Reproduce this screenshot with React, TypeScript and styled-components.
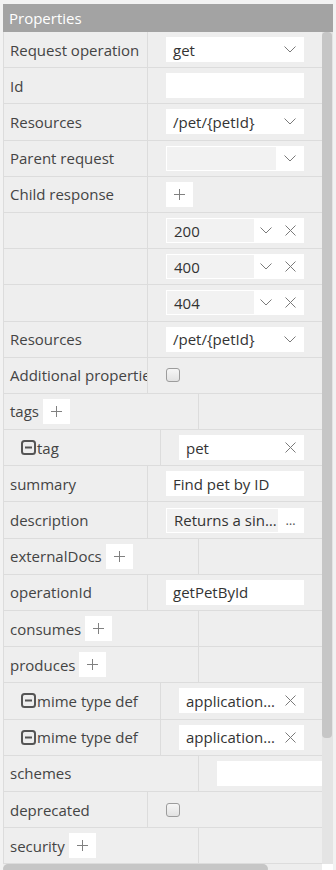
import React from 'react'
import styled, { createGlobalStyle } from 'styled-components'

const GlobalStyle = createGlobalStyle`
  html, body {
    margin: 0;
    padding: 0;
    background: #f2f2f2;
    overflow: hidden;
  }
  body {
    font-family: "Open Sans", "Liberation Sans", sans-serif;
  }
`

const SPLIT = 144
const SPLIT_NESTED = 157
const SPLIT_WIDE = 195

const Chevron = () => (
  <svg width="12" height="7" viewBox="0 0 12 7">
    <polyline points="0.5,0.5 6,6 11.5,0.5" fill="none" stroke="#7a7a7a" strokeWidth="1" />
  </svg>
)

const Cross = () => (
  <svg width="11" height="11" viewBox="0 0 11 11">
    <line x1="0.5" y1="0.5" x2="10.5" y2="10.5" stroke="#7a7a7a" strokeWidth="1" />
    <line x1="10.5" y1="0.5" x2="0.5" y2="10.5" stroke="#7a7a7a" strokeWidth="1" />
  </svg>
)

const Plus = () => (
  <svg width="11" height="11" viewBox="0 0 11 11">
    <line x1="5.5" y1="0" x2="5.5" y2="11" stroke="#808080" strokeWidth="1" />
    <line x1="0" y1="5.5" x2="11" y2="5.5" stroke="#808080" strokeWidth="1" />
  </svg>
)

const MinusBox = () => (
  <svg width="15" height="15" viewBox="0 0 15 15">
    <rect x="1" y="1" width="13" height="13" rx="2.5" fill="none" stroke="#555" strokeWidth="2" />
    <line x1="4" y1="7.5" x2="11" y2="7.5" stroke="#555" strokeWidth="2" />
  </svg>
)

const Add = () => (
  <AddButton>
    <Plus />
  </AddButton>
)

const App = () => {
  return (
    <>
      <GlobalStyle />
      <Panel>
        <Header>Properties</Header>
        <ScrollFrame>
          <Viewport>
            <Row $split={SPLIT}>
              <Label>Request operation</Label>
              <Value>
                <Field>
                  <FieldText>get</FieldText>
                  <TrailIcon>
                    <Chevron />
                  </TrailIcon>
                </Field>
              </Value>
            </Row>
            <Row $split={SPLIT}>
              <Label>Id</Label>
              <Value>
                <Field />
              </Value>
            </Row>
            <Row $split={SPLIT}>
              <Label>Resources</Label>
              <Value>
                <Field>
                  <FieldText>/pet/{'{petId}'}</FieldText>
                  <TrailIcon>
                    <Chevron />
                  </TrailIcon>
                </Field>
              </Value>
            </Row>
            <Row $split={SPLIT}>
              <Label>Parent request</Label>
              <Value>
                <Field $framed>
                  <GreyInput />
                  <SideButton $width={27}>
                    <Chevron />
                  </SideButton>
                </Field>
              </Value>
            </Row>
            <Row $split={SPLIT}>
              <Label>Child response</Label>
              <Value>
                <Add />
              </Value>
            </Row>
            {['200', '400', '404'].map((code) => (
              <Row $split={SPLIT} key={code}>
                <Label />
                <Value>
                  <Field $framed>
                    <GreyInput>
                      <FieldText>{code}</FieldText>
                      <SideButton $width={23}>
                        <Chevron />
                      </SideButton>
                    </GreyInput>
                    <RemoveSlot>
                      <Cross />
                    </RemoveSlot>
                  </Field>
                </Value>
              </Row>
            ))}
            <Row $split={SPLIT}>
              <Label>Resources</Label>
              <Value>
                <Field>
                  <FieldText>/pet/{'{petId}'}</FieldText>
                  <TrailIcon>
                    <Chevron />
                  </TrailIcon>
                </Field>
              </Value>
            </Row>
            <Row $split={SPLIT}>
              <Label>Additional properties</Label>
              <Value>
                <CheckBox />
              </Value>
            </Row>
            <Row $split={SPLIT_WIDE}>
              <Label>
                tags
                <Add />
              </Label>
              <Value />
            </Row>
            <Row $split={SPLIT_NESTED}>
              <Label $nested>
                <MinusBox />
                tag
              </Label>
              <Value>
                <Field>
                  <FieldText>pet</FieldText>
                  <TrailIcon>
                    <Cross />
                  </TrailIcon>
                </Field>
              </Value>
            </Row>
            <Row $split={SPLIT}>
              <Label>summary</Label>
              <Value>
                <Field>
                  <FieldText>Find pet by ID</FieldText>
                </Field>
              </Value>
            </Row>
            <Row $split={SPLIT}>
              <Label>description</Label>
              <Value>
                <Field $framed>
                  <GreyInput>
                    <FieldText>Returns a single pet</FieldText>
                  </GreyInput>
                  <SideButton $width={25}>…</SideButton>
                </Field>
              </Value>
            </Row>
            <Row $split={SPLIT_WIDE}>
              <Label>
                externalDocs
                <Add />
              </Label>
              <Value />
            </Row>
            <Row $split={SPLIT}>
              <Label>operationId</Label>
              <Value>
                <Field>
                  <FieldText>getPetById</FieldText>
                </Field>
              </Value>
            </Row>
            <Row $split={SPLIT_WIDE}>
              <Label>
                consumes
                <Add />
              </Label>
              <Value />
            </Row>
            <Row $split={SPLIT_WIDE}>
              <Label>
                produces
                <Add />
              </Label>
              <Value />
            </Row>
            {['application/json', 'application/xml'].map((mime) => (
              <Row $split={SPLIT_NESTED} key={mime}>
                <Label $nested>
                  <MinusBox />
                  mime type def
                </Label>
                <Value>
                  <Field>
                    <FieldText>{mime}</FieldText>
                    <TrailIcon>
                      <Cross />
                    </TrailIcon>
                  </Field>
                </Value>
              </Row>
            ))}
            <Row $split={SPLIT_WIDE}>
              <Label>schemes</Label>
              <Value>
                <Field $fixed />
              </Value>
            </Row>
            <Row $split={SPLIT}>
              <Label>deprecated</Label>
              <Value>
                <CheckBox />
              </Value>
            </Row>
            <Row $split={SPLIT_WIDE}>
              <Label>
                security
                <Add />
              </Label>
              <Value />
            </Row>
          </Viewport>
          <VTrack>
            <VThumb />
          </VTrack>
          <HTrack>
            <HThumb />
          </HTrack>
          <Corner />
        </ScrollFrame>
      </Panel>
    </>
  )
}

const Panel = styled.div`
  padding: 4px 3px 0 3px;
  width: 330px;
`

const Header = styled.div`
  height: 28px;
  background: #a3a3a3;
  color: #ffffff;
  font-size: 15px;
  padding-left: 6px;
  display: flex;
  align-items: center;
`

const ScrollFrame = styled.div`
  display: grid;
  grid-template-columns: 319px 11px;
  grid-template-rows: 832px 10px;
`

const Viewport = styled.div`
  overflow: hidden;
  background: #eeeeee;
  border-left: 1px solid #dcdcdc;
  box-sizing: border-box;
`

const VTrack = styled.div`
  background: #e4e4e4;
`

const VThumb = styled.div`
  width: 10px;
  height: 706px;
  border-radius: 4px;
  background: #c6c6c6;
`

const HTrack = styled.div`
  background: #ededed;
`

const HThumb = styled.div`
  width: 265px;
  height: 10px;
  border-radius: 5px;
  background: #c6c6c6;
`

const Corner = styled.div`
  background: #ffffff;
`

const Row = styled.div<{ $split: number }>`
  display: grid;
  grid-template-columns: ${(p) => p.$split}px 1fr;
  height: 36.2px;
  box-sizing: border-box;
  border-bottom: 1px solid #dcdcdc;
  font-size: 15px;
  color: #444444;
`

const Label = styled.div<{ $nested?: boolean }>`
  display: flex;
  align-items: center;
  gap: ${(p) => (p.$nested ? '1px' : '4px')};
  padding-left: ${(p) => (p.$nested ? '17px' : '6px')};
  border-right: 1px solid #dcdcdc;
  white-space: nowrap;
  overflow: hidden;
`

const Value = styled.div`
  display: flex;
  align-items: center;
  padding: 0 18px;
  overflow: hidden;
  min-width: 0;
`

const Field = styled.div<{ $framed?: boolean; $fixed?: boolean }>`
  display: flex;
  align-items: center;
  height: 25px;
  box-sizing: border-box;
  background: #ffffff;
  padding: ${(p) => (p.$framed ? '1px' : '0')};
  flex: ${(p) => (p.$fixed ? '0 0 137px' : '1 1 auto')};
  min-width: 0;
  color: #333333;
`

const FieldText = styled.span`
  flex: 1 1 auto;
  min-width: 0;
  padding-left: 7px;
  white-space: nowrap;
  overflow: hidden;
  text-overflow: ellipsis;
`

const TrailIcon = styled.span`
  display: flex;
  align-items: center;
  padding: 0 8px 0 6px;
`

const GreyInput = styled.div`
  flex: 1 1 auto;
  min-width: 0;
  height: 100%;
  display: flex;
  align-items: center;
  background: #f2f2f2;
`

const SideButton = styled.div<{ $width: number }>`
  flex: 0 0 ${(p) => p.$width}px;
  height: 100%;
  display: flex;
  align-items: center;
  justify-content: center;
  background: #ffffff;
  color: #555555;
  font-size: 13px;
`

const RemoveSlot = styled.div`
  flex: 0 0 26px;
  display: flex;
  align-items: center;
  justify-content: center;
`

const AddButton = styled.span`
  flex: 0 0 auto;
  width: 27px;
  height: 25px;
  display: flex;
  align-items: center;
  justify-content: center;
  background: #ffffff;
`

const CheckBox = styled.span`
  width: 14px;
  height: 14px;
  box-sizing: border-box;
  border: 1px solid #9c9c9c;
  border-radius: 3px;
  background: linear-gradient(#f6f6f6, #e2e2e2);
`

export default App
